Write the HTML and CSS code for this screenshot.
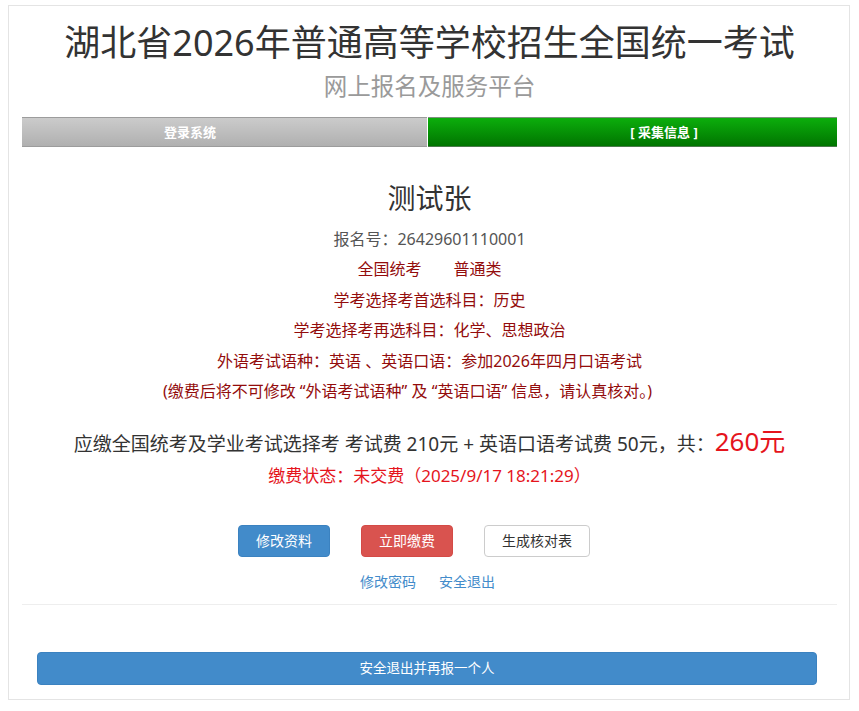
FILE: index.html
```html
<!DOCTYPE html>
<html lang="zh-CN">
<head>
<meta charset="utf-8">
<title>湖北省2026年普通高等学校招生全国统一考试 网上报名及服务平台</title>
<link rel="stylesheet" href="styles.css">
</head>
<body>
<div class="card">
  <h1 class="title">湖北省2026年普通高等学校招生全国统一考试</h1>
  <div class="subtitle">网上报名及服务平台</div>
  <div class="steps">
    <div class="step step-done"><span class="step-label-done">登录系统</span></div>
    <div class="step step-current"><span class="step-label-current">[ 采集信息 ]</span></div>
  </div>
  <div class="profile">
    <div class="name">测试张</div>
    <div class="rows">
      <div class="row row-id">报名号：26429601110001</div>
      <div class="row row-info">全国统考<span class="gap">普通类</span></div>
      <div class="row row-info">学考选择考首选科目：历史</div>
      <div class="row row-info">学考选择考再选科目：化学、思想政治</div>
      <div class="row row-info">外语考试语种：英语 、英语口语：参加2026年四月口语考试</div>
      <div class="row row-info row-note">(缴费后将不可修改 “外语考试语种” 及 “英语口语” 信息，请认真核对。)</div>
    </div>
    <div class="fee">应缴全国统考及学业考试选择考 考试费 210元 + 英语口语考试费 50元，共：<span class="total">260元</span></div>
    <div class="status">缴费状态：未交费（2025/9/17 18:21:29）</div>
    <div class="actions">
      <button class="btn btn-primary">修改资料</button>
      <button class="btn btn-danger">立即缴费</button>
      <button class="btn btn-default">生成核对表</button>
    </div>
    <div class="links">
      <a class="link" href="#">修改密码</a>
      <a class="link" href="#">安全退出</a>
    </div>
  </div>
  <hr class="divider">
  <div class="bottom">
    <button class="btn btn-primary btn-block">安全退出并再报一个人</button>
  </div>
</div>
</body>
</html>
```

FILE: styles.css
```css
html, body {
  background: #ffffff;
}
body {
  margin: 5px 9px 0 8px;
  font-family: "Noto Sans", "Noto Sans CJK SC", sans-serif;
  color: #333333;
}
.card {
  background: #ffffff;
  border: 1px solid #e4e4e4;
  box-shadow: 0 2px 10px rgba(0, 0, 0, 0.5);
  padding: 0 12px 14px 13px;
}
.title {
  margin: 15px 0 0;
  font-size: 36px;
  line-height: 44px;
  font-weight: normal;
  text-align: center;
  color: #333333;
}
.subtitle {
  margin-top: 6px;
  font-size: 23.5px;
  line-height: 30px;
  text-align: center;
  color: #9a9a9a;
}
.steps {
  margin-top: 16px;
  display: grid;
  grid-template-columns: 405px 1fr;
  column-gap: 1px;
  height: 30px;
}
.step {
  box-sizing: border-box;
  height: 30px;
  line-height: 28px;
  font-size: 13px;
  font-weight: bold;
  color: #ffffff;
  text-align: center;
}
.step-done {
  background: linear-gradient(#cbcbcb, #b0b0b0);
  border-top: 1px solid #9c9c9c;
  border-bottom: 1px solid #9c9c9c;
  padding-right: 69px;
}
.step-current {
  background: linear-gradient(#0cae0c, #007500);
  border-top: 1px solid #7f8f7f;
  border-bottom: 1px solid #4b7a4b;
  padding-left: 63px;
}
.profile {
  text-align: center;
}
.name {
  margin-top: 33px;
  font-size: 28px;
  line-height: 36px;
  color: #333333;
}
.rows {
  margin-top: 8px;
}
.row {
  font-size: 16px;
  line-height: 30.4px;
}
.row-id {
  color: #555555;
}
.row-info {
  color: #930c0c;
}
.row-note {
  padding-right: 44px;
}
.gap {
  margin-left: 32px;
}
.fee {
  margin-top: 20.5px;
  font-size: 19px;
  line-height: 34px;
  color: #333333;
  white-space: nowrap;
}
.total {
  font-size: 26px;
  line-height: 20px;
  color: #e5141c;
}
.status {
  font-size: 17px;
  line-height: 30px;
  color: #e5141c;
}
.actions {
  margin-top: 34px;
  display: flex;
  justify-content: center;
  gap: 31px;
  padding-right: 31px;
}
.btn {
  box-sizing: border-box;
  height: 32px;
  padding: 0 17px;
  font-family: inherit;
  font-size: 14px;
  line-height: 30px;
  border-radius: 4px;
  border: 1px solid transparent;
  cursor: pointer;
}
.btn-primary {
  background: #428bca;
  border-color: #3b82c0;
  color: #ffffff;
}
.btn-danger {
  background: #d9534f;
  border-color: #d44a46;
  color: #ffffff;
}
.btn-default {
  background: #ffffff;
  border-color: #cccccc;
  color: #333333;
}
.links {
  margin-top: 15px;
  display: flex;
  justify-content: center;
  gap: 23px;
  padding-right: 4px;
  font-size: 14px;
  line-height: 20px;
}
.link {
  color: #428bca;
  text-decoration: none;
}
.divider {
  margin: 12px 0 0;
  border: 0;
  border-top: 1px solid #eeeeee;
  height: 0;
}
.bottom {
  margin-top: 47px;
  padding: 0 20px 0 15px;
}
.btn-block {
  display: block;
  width: 100%;
  height: 33px;
  line-height: 31px;
  font-size: 13.5px;
}
```
